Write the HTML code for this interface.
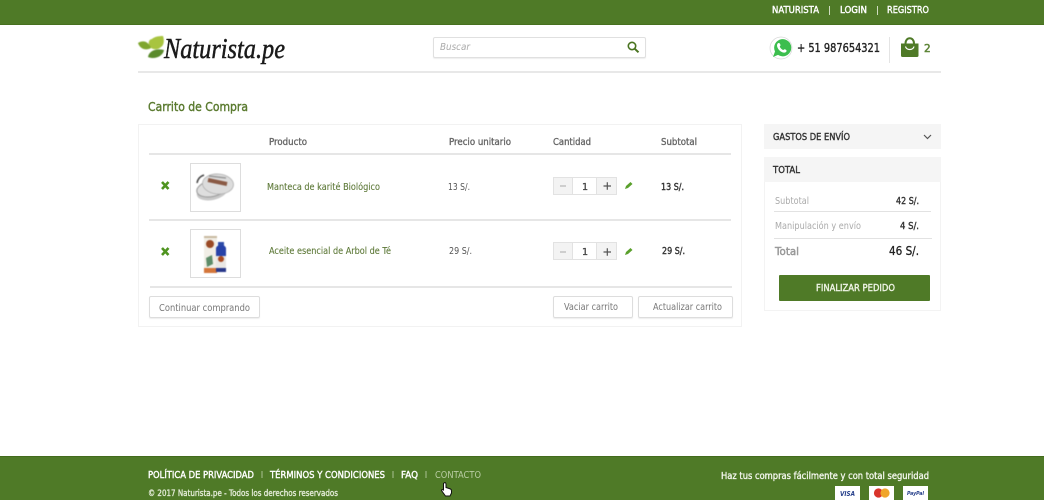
<!DOCTYPE html>
<html lang="es"><head><meta charset="utf-8"><title>Carrito de Compra - Naturista.pe</title>
<style>
html,body{margin:0;padding:0;background:#fff}
body{position:relative;width:1044px;height:500px;overflow:hidden;font-family:"DejaVu Sans",sans-serif}
.b{position:absolute;box-sizing:border-box}
svg{position:absolute;left:0;top:0}
text{font-family:"DejaVu Sans",sans-serif}
.logo{font-family:"Liberation Serif",serif;font-style:italic}
.soft{filter:blur(.45px)}
</style></head><body>
<div class="b" style="left:0;top:0;width:1044px;height:25px;background:#4f7a27;border-bottom:1px solid #47701f"></div>
<div class="b" style="left:138px;top:71px;width:803px;height:2px;background:#e8e8e8"></div>
<div class="b" style="left:433px;top:37px;width:213px;height:21px;background:#fff;border:1px solid #e0e0e0;border-radius:2px;box-shadow:0 1px 1px #eee"></div>
<div class="b" style="left:889px;top:37px;width:1px;height:26px;background:#e4e4e4"></div>
<div class="b" style="left:138px;top:124px;width:604px;height:203px;border:1px solid #f2f2f2"></div>
<div class="b" style="left:149px;top:153px;width:582px;height:2px;background:#e6e6e6"></div>
<div class="b" style="left:149px;top:219px;width:582px;height:2px;background:#e6e6e6"></div>
<div class="b" style="left:150px;top:286px;width:582px;height:2px;background:#e6e6e6"></div>
<div class="b" style="left:190px;top:163px;width:51px;height:49px;border:1px solid #ddd;background:#fff"></div>
<div class="b" style="left:190px;top:229px;width:51px;height:49px;border:1px solid #ddd;background:#fff"></div>
<div class="b" style="left:149px;top:296px;width:111px;height:22px;border:1px solid #ddd;border-radius:2px;box-shadow:0 1px 1px #eee"></div>
<div class="b" style="left:553px;top:296px;width:80px;height:22px;border:1px solid #ddd;border-radius:2px;box-shadow:0 1px 1px #eee"></div>
<div class="b" style="left:638px;top:296px;width:95px;height:22px;border:1px solid #ddd;border-radius:2px;box-shadow:0 1px 1px #eee"></div>
<div class="b" style="left:553px;top:177px;width:64px;height:18px;border:1px solid #e2e2e2;background:#f3f3f3"><div class="b" style="left:18px;top:0;width:25px;height:16px;background:#fff;border-left:1px solid #e2e2e2;border-right:1px solid #e2e2e2"></div></div>
<div class="b" style="left:553px;top:242px;width:64px;height:18px;border:1px solid #e2e2e2;background:#f3f3f3"><div class="b" style="left:18px;top:0;width:25px;height:16px;background:#fff;border-left:1px solid #e2e2e2;border-right:1px solid #e2e2e2"></div></div>
<div class="b" style="left:764px;top:124px;width:177px;height:25px;background:#f5f5f5"></div>
<div class="b" style="left:764px;top:157px;width:177px;height:154px;border:1px solid #f3f3f3"></div>
<div class="b" style="left:764px;top:157px;width:177px;height:25px;background:#f5f5f5"></div>
<div class="b" style="left:774px;top:211px;width:157px;height:1px;background:#e2e2e2"></div>
<div class="b" style="left:774px;top:238px;width:158px;height:1px;background:#e2e2e2"></div>
<div class="b" style="left:779px;top:275px;width:151px;height:26px;background:#4f7a27;border-radius:1px"></div>
<div class="b" style="left:0;top:456px;width:1044px;height:44px;background:#4f7a27;border-top:1px solid #436b1c"></div>
<div class="b" style="left:835px;top:486px;width:25px;height:14px;background:#fff"></div>
<div class="b" style="left:869px;top:486px;width:25px;height:14px;background:#fff"></div>
<div class="b" style="left:903px;top:486px;width:25px;height:14px;background:#fff"></div>

<svg width="1044" height="500" viewBox="0 0 1044 500">
<!-- top bar -->
<g fill="#fff" stroke="#fff" stroke-width=".4" font-size="9.500">
<text x="772" y="13" textLength="47" lengthAdjust="spacingAndGlyphs">NATURISTA</text>
<text x="840" y="13" textLength="27" lengthAdjust="spacingAndGlyphs">LOGIN</text>
<text x="887" y="13" textLength="42" lengthAdjust="spacingAndGlyphs">REGISTRO</text>
</g>
<rect x="829" y="6" width="1" height="9" fill="#cfdcc0"/><rect x="877" y="6" width="1" height="9" fill="#cfdcc0"/>

<!-- logo -->
<g class="soft">
<path d="M150 47C147 42 150 39 152 39C154 37 158 36 163 36C165 42 163 46 161 47C158 50 153 50 150 47Z" fill="#a8c43f"/>
<path d="M138 43C143 40 148 41 151 48C146 51 140 49 138 43Z" fill="#7fa62f"/>
<path d="M148 57C149 51 156 48 164 50C163 56 155 60 148 57Z" fill="#5a8a2c"/>
</g>
<text class="logo" x="164" y="58" font-size="29" fill="#1a1a1a" stroke="#1a1a1a" stroke-width=".5" textLength="121" lengthAdjust="spacingAndGlyphs">Naturista.pe</text>

<!-- search -->
<text x="440" y="50" font-size="10" font-style="italic" fill="#aaa" textLength="30" lengthAdjust="spacingAndGlyphs">Buscar</text>
<circle cx="632" cy="46" r="3.700" fill="none" stroke="#4a7420" stroke-width="1.600"/><path d="M634.800 48.800L638.500 52.300" stroke="#4a7420" stroke-width="2"/>

<!-- whatsapp -->
<circle cx="781" cy="48" r="11" fill="#fff" stroke="#d8d8d8" stroke-width=".7"/>
<path d="M773 57L775 51.500A8.600 8.600 0 1 1 778 54.900Z" fill="#3cbe4e"/>
<path d="M777.500 43.700C779 42.400 779.800 43 780.500 45C780.700 45.800 779.600 46.200 779.800 46.800C780.400 48.200 781.600 49.400 783 50C783.600 50.200 784.200 49 785 49.300C786.800 50.200 787 51 786 52C784.400 53.400 781.500 52.400 779.600 50.500C777.500 48.400 776.300 45.400 777.500 43.700Z" fill="#fff"/>
<text x="797" y="52" font-size="12" fill="#222" stroke="#222" stroke-width=".35" textLength="83" lengthAdjust="spacingAndGlyphs">+ 51 987654321</text>
<!-- bag -->
<path d="M901 43.500H918.500V55.500Q918.500 57 917 57H902.500Q901 57 901 55.500Z" fill="#4f7a27"/>
<path d="M905.500 43.500C905.500 36.500 914 36.500 914 43.500" fill="none" stroke="#4f7a27" stroke-width="2"/>
<path d="M905.500 46.500C906.500 50.500 913 50.500 914 46.500" fill="none" stroke="#fff" stroke-width="1.200"/>
<text x="924" y="52" font-size="10.500" fill="#5c8435" stroke="#5c8435" stroke-width=".5">2</text>

<text x="148" y="111" font-size="12" fill="#5a7a2f" stroke="#5a7a2f" stroke-width=".4" textLength="100" lengthAdjust="spacingAndGlyphs">Carrito de Compra</text>

<!-- table header -->
<g font-size="9.500" fill="#666" stroke="#666" stroke-width=".35">
<text x="269" y="145" textLength="38" lengthAdjust="spacingAndGlyphs">Producto</text>
<text x="449" y="145" textLength="62" lengthAdjust="spacingAndGlyphs">Precio unitario</text>
<text x="553" y="145" textLength="38" lengthAdjust="spacingAndGlyphs">Cantidad</text>
<text x="661" y="145" textLength="36" lengthAdjust="spacingAndGlyphs">Subtotal</text>
</g>

<!-- remove icons -->
<path d="M162 182L168.500 189M168.500 182L162 189" stroke="#4f9420" stroke-width="2.600"/>
<path d="M162 248L168.500 255M168.500 248L162 255" stroke="#4f9420" stroke-width="2.600"/>

<!-- product 1: tin -->
<g class="soft">
<ellipse cx="212" cy="192" rx="15.500" ry="8" fill="#c8c8c8" transform="rotate(-12 212 192)"/>
<ellipse cx="212" cy="188.500" rx="15.500" ry="8" fill="#dedede" stroke="#999" stroke-width="1" transform="rotate(-12 212 188.500)"/>
<ellipse cx="218" cy="184" rx="15.500" ry="10" fill="#dcdcdc" stroke="#b0b0b0" stroke-width=".8" transform="rotate(4 218 184)"/>
<path d="M197 183Q198 177 204 175" stroke="#444" stroke-width="1.500" fill="none"/>
<path d="M208 180L227 184" stroke="#8a5a45" stroke-width="4"/>
<path d="M209 176L226 178" stroke="#999" stroke-width="1.500"/>
</g>

<!-- product 2: box + bottle -->
<g class="soft">
<rect x="204" y="236" width="13" height="37" fill="#f1eee6"/>
<circle cx="210" cy="244" r="4" fill="#9a4a25"/>
<rect x="204" y="236" width="13" height="2" fill="#c8b9a0"/>
<path d="M206 258L212 255L213 264L207 267Z" fill="#5d8c68"/>
<rect x="204" y="268" width="13" height="5" fill="#d4763a"/>
<rect x="218" y="242" width="6" height="4" fill="#2d4ba8"/>
<path d="M216 248Q217 245.500 219 245.500H223Q225 245.500 226 248V256H216Z" fill="#2742a8"/>
<rect x="216" y="256" width="10" height="12" fill="#e9e7e4"/>
<circle cx="221" cy="259" r="3" fill="#a8481f"/>
<rect x="216" y="268" width="10" height="4" fill="#27378a"/>
</g>

<!-- products text -->
<g font-size="9.500" fill="#5f7a3a" stroke="#5f7a3a" stroke-width=".12">
<text x="267" y="190" textLength="113" lengthAdjust="spacingAndGlyphs">Manteca de karité Biológico</text>
<text x="269" y="254" textLength="122" lengthAdjust="spacingAndGlyphs">Aceite esencial de Arbol de Té</text>
</g>
<g font-size="9.500" fill="#555">
<text x="448" y="190" textLength="22" lengthAdjust="spacingAndGlyphs">13 S/.</text>
<text x="449" y="254" textLength="23" lengthAdjust="spacingAndGlyphs">29 S/.</text>
</g>
<g font-size="9.500" fill="#333" stroke="#333" stroke-width=".4">
<text x="661" y="190" textLength="23" lengthAdjust="spacingAndGlyphs">13 S/.</text>
<text x="662" y="254" textLength="23" lengthAdjust="spacingAndGlyphs">29 S/.</text>
</g>

<!-- qty -->
<g fill="#444" stroke="#444" stroke-width=".3" font-size="9.500">
<text x="582" y="190">1</text><text x="582" y="255">1</text>
</g>
<path d="M560 186H566M560 252H566" stroke="#aaa" stroke-width="1"/>
<path d="M603.500 186H611M607.300 182.300V189.700M603.500 252H611M607.300 248.300V255.700" stroke="#555" stroke-width="1.200"/>
<path d="M625 189L626 186L630.500 182L632.500 184L628 188Z" fill="#5aa02c"/>
<path d="M625 255L626 252L630.500 248L632.500 250L628 254Z" fill="#5aa02c"/>

<!-- buttons -->
<g font-size="9.500" fill="#777">
<text x="159" y="311" textLength="91" lengthAdjust="spacingAndGlyphs">Continuar comprando</text>
<text x="564" y="310" textLength="54" lengthAdjust="spacingAndGlyphs">Vaciar carrito</text>
<text x="653" y="310" textLength="69" lengthAdjust="spacingAndGlyphs">Actualizar carrito</text>
</g>

<!-- sidebar -->
<g font-size="9.500" fill="#333" stroke="#333" stroke-width=".4">
<text x="773" y="140" textLength="77" lengthAdjust="spacingAndGlyphs">GASTOS DE ENVÍO</text>
<text x="773" y="173" textLength="27" lengthAdjust="spacingAndGlyphs">TOTAL</text>
</g>
<path d="M924 135L927.500 138.500L931 135" fill="none" stroke="#555" stroke-width="1.200"/>
<g font-size="9.500" fill="#aaa">
<text x="775" y="204" textLength="34" lengthAdjust="spacingAndGlyphs">Subtotal</text>
<text x="775" y="229" textLength="86" lengthAdjust="spacingAndGlyphs">Manipulación y envío</text>
</g>
<text x="775" y="255" font-size="11" fill="#999" stroke="#999" stroke-width=".5" textLength="24" lengthAdjust="spacingAndGlyphs">Total</text>
<g fill="#333" stroke="#333" stroke-width=".4" font-size="9.500">
<text x="896" y="204" textLength="23" lengthAdjust="spacingAndGlyphs">42 S/.</text>
<text x="900" y="229" textLength="19" lengthAdjust="spacingAndGlyphs">4 S/.</text>
</g>
<text x="889" y="255" font-size="12.500" fill="#222" stroke="#222" stroke-width=".3" textLength="30" lengthAdjust="spacingAndGlyphs">46 S/.</text>
<text x="816" y="291" font-size="9.500" fill="#eef3e4" stroke="#eef3e4" stroke-width=".4" textLength="79" lengthAdjust="spacingAndGlyphs">FINALIZAR PEDIDO</text>

<!-- footer -->
<g font-size="9.500" fill="#fff" stroke="#fff" stroke-width=".4">
<text x="148" y="478" textLength="106" lengthAdjust="spacingAndGlyphs">POLÍTICA DE PRIVACIDAD</text>
<text x="270" y="478" textLength="115" lengthAdjust="spacingAndGlyphs">TÉRMINOS Y CONDICIONES</text>
<text x="401" y="478" textLength="17" lengthAdjust="spacingAndGlyphs">FAQ</text>
</g>
<text x="435" y="478" font-size="9.500" fill="#b9cca3" textLength="46" lengthAdjust="spacingAndGlyphs">CONTACTO</text>
<path d="M262 471V478M393 471V478M426 471V478" stroke="#a9c090" stroke-width="1"/>
<text x="148" y="496" font-size="8.500" fill="#e4ecd8" stroke="#e4ecd8" stroke-width=".35" textLength="190" lengthAdjust="spacingAndGlyphs">© 2017 Naturista.pe - Todos los derechos reservados</text>
<text x="721" y="479" font-size="9.500" fill="#f4f7ee" stroke="#f4f7ee" stroke-width=".35" textLength="208" lengthAdjust="spacingAndGlyphs">Haz tus compras fácilmente y con total seguridad</text>

<!-- payment -->
<text x="840" y="496" font-size="7" font-weight="700" font-style="italic" fill="#27408b" textLength="15" lengthAdjust="spacingAndGlyphs">VISA</text>
<circle cx="878.500" cy="493" r="4.600" fill="#d9342b"/><circle cx="885" cy="493" r="4.600" fill="#f0a52b"/>
<text x="907" y="495" font-size="5.500" font-weight="700" font-style="italic" fill="#27408b" textLength="17" lengthAdjust="spacingAndGlyphs">PayPal</text>

<!-- cursor -->
<path d="M443.500 483.500Q445.500 481.500 446 484V487.500L450.500 489Q451.500 489.500 451.500 491V493L450 496H445.500L441.500 490.500Q441.500 489 443.500 490Z" fill="#fff" stroke="#111" stroke-width="1"/>
</svg>
</body></html>
